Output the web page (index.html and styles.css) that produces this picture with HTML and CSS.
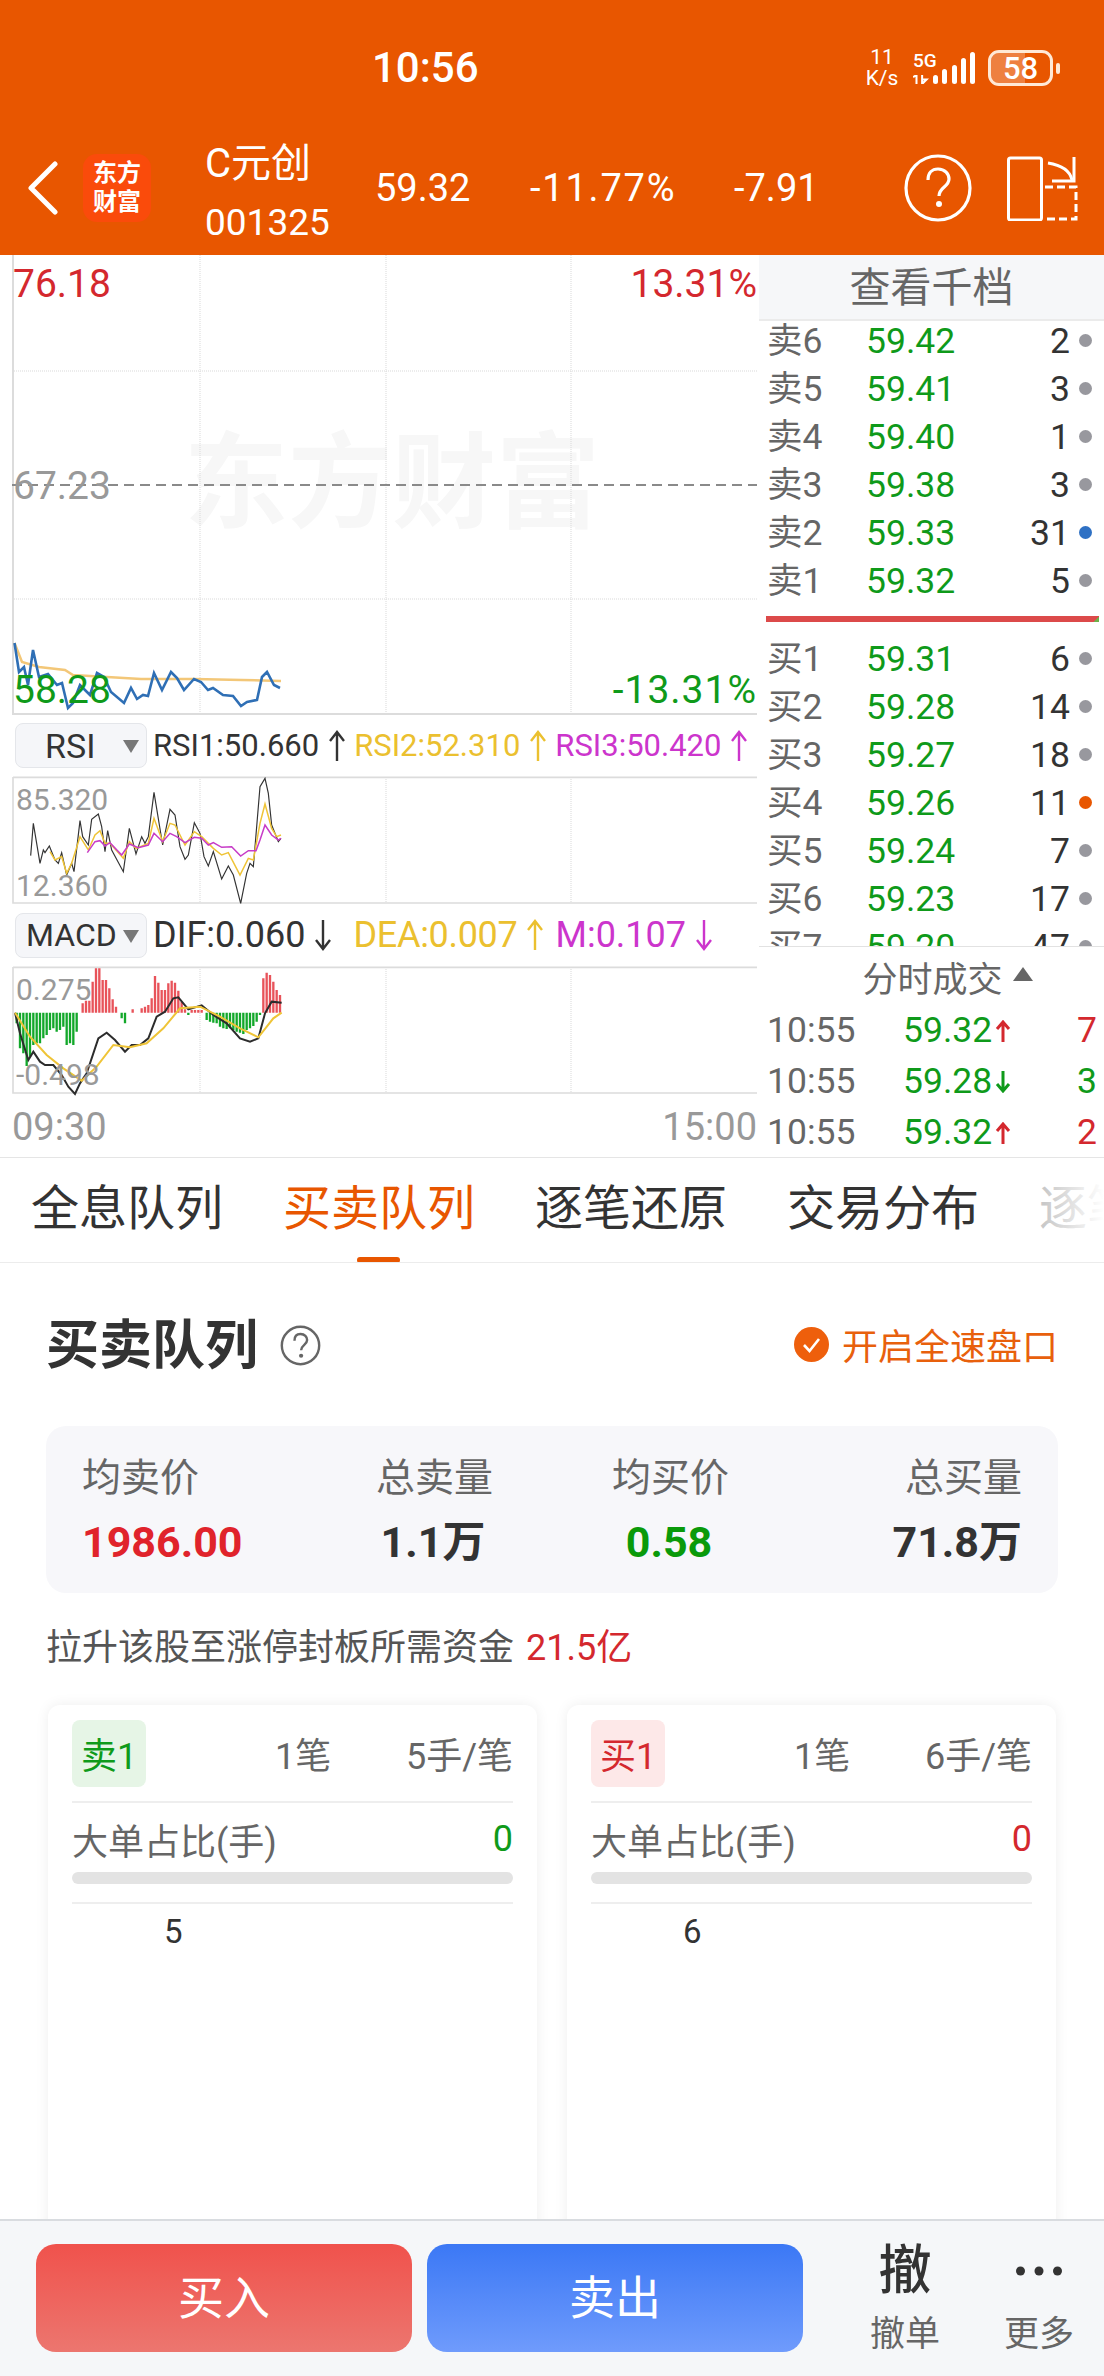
FILE: index.html
```html
<!DOCTYPE html>
<html lang="zh-CN">
<head>
<meta charset="utf-8">
<title>C元创 001325</title>
<link rel="stylesheet" href="styles.css">
</head>
<body>
<svg class="defs" width="0" height="0" aria-hidden="true">
  <symbol id="arrow-up" viewBox="0 0 18 32"><path d="M9 31V2M2 11L9 2L16 11" fill="none" stroke="currentColor" stroke-width="2.4"/></symbol>
  <symbol id="arrow-down" viewBox="0 0 18 32"><path d="M9 1V30M2 21L9 30L16 21" fill="none" stroke="currentColor" stroke-width="2.4"/></symbol>
  <symbol id="tick-up" viewBox="0 0 16 22"><path d="M8 22V3M2 9L8 2L14 9" fill="none" stroke="currentColor" stroke-width="3"/></symbol>
  <symbol id="tick-down" viewBox="0 0 16 22"><path d="M8 0V19M2 13L8 20L14 13" fill="none" stroke="currentColor" stroke-width="3"/></symbol>
</svg>
<div class="page">
  <header class="top">
    <div class="status">
      <span class="clock">10:56</span>
      <div class="status-icons">
        <div class="speed"><span>11</span><span>K/s</span></div>
        <div class="net">
          <span class="net-5g">5G</span>
          <svg class="net-arrows" width="16" height="9" viewBox="0 0 14 8"><path d="M3 0V8M0 2L3 0M8 0V8M8 8L12 4H8" fill="none" stroke="#fff" stroke-width="1.8"/></svg>
        </div>
        <svg class="bars" width="44" height="32" viewBox="0 0 44 32">
          <rect x="0" y="23" width="5" height="9" rx="2.5" fill="#fff"/>
          <rect x="9" y="17" width="5" height="15" rx="2.5" fill="#fff"/>
          <rect x="19" y="13" width="5" height="19" rx="2.5" fill="#fff"/>
          <rect x="28" y="6" width="5" height="26" rx="2.5" fill="#fff"/>
          <rect x="37" y="0" width="5" height="32" rx="2.5" fill="#fff"/>
        </svg>
        <div class="battery"><span class="battery-fill"></span><span class="battery-num">58</span></div>
      </div>
    </div>
    <nav class="nav">
      <svg class="back" width="31" height="54" viewBox="0 0 31 54"><path d="M28 3L4 27L28 51" fill="none" stroke="#fff" stroke-width="5" stroke-linecap="round" stroke-linejoin="round"/></svg>
      <div class="logo"><span>东方</span><span>财富</span></div>
      <div class="stock"><div class="stock-name">C元创</div><div class="stock-code">001325</div></div>
      <span class="quote q-price">59.32</span>
      <span class="quote q-pct">-11.77%</span>
      <span class="quote q-chg">-7.91</span>
      <svg class="help" width="68" height="68" viewBox="0 0 68 68">
        <circle cx="34" cy="34" r="32" fill="none" stroke="#fff" stroke-width="3.2"/>
        <path d="M24 26C24 19 28 15 34 15C41 15 45 20 45 25C45 33 35 33 35 42" fill="none" stroke="#fff" stroke-width="3.2"/>
        <circle cx="35" cy="50" r="3" fill="#fff"/>
      </svg>
      <svg class="rotate" width="71" height="66" viewBox="0 0 71 66">
        <rect x="1.5" y="3" width="33" height="62" rx="2" fill="none" stroke="#fff" stroke-width="3"/>
        <path d="M41 8C54 10 63 16 65 25" fill="none" stroke="#fff" stroke-width="3"/>
        <path d="M67 2V26H45" fill="none" stroke="#fff" stroke-width="3"/>
        <path d="M38 32H69V64H38" fill="none" stroke="#fff" stroke-width="3" stroke-dasharray="8 4"/>
      </svg>
    </nav>
  </header>

  <section class="market">
    <div class="charts">
      <div class="chart">
        <div class="watermark">东方财富</div>
        <svg class="chart-svg" width="745" height="459" viewBox="12 255 745 459">
          <g class="grid">
            <path d="M200 255V713M386 255V713M571 255V713M14 371H757M14 599H757"/>
          </g>
          <path class="frame" d="M13 255V714H757"/>
          <path d="M12 485H757" fill="none" stroke="#8a8a8a" stroke-width="2" stroke-dasharray="10 6"/>
          <polyline class="avg" points="14.5,643 22,662 39,667 65,670 73,675 107,677 141,679 194,679 242,680 281,681"/>
          <polyline class="price-line" points="14.5,643 19,672 24,667 28,685 33,650 39,677 48,674 57,685 62,683 68,708 73,703 80,685 90,695 97,673 104,677 111,692 124,703 131,688 137,699 143,695 148,696 154,673 162,690 171,672 177,678 184,690 194,679 201,682 208,690 213,688 223,695 233,696 241,706 247,702 257,700 262,677 267,672 274,685 280,688"/>
        </svg>
        <span class="lbl lbl-big red tl">76.18</span>
        <span class="lbl lbl-big red tr">13.31%</span>
        <span class="lbl lbl-big gray ml">67.23</span>
        <span class="lbl lbl-big green bl">58.28</span>
        <span class="lbl lbl-big green br">-13.31%</span>
      </div>

      <div class="ind-row">
        <div class="ind-select"><span class="rsi-name">RSI</span><i class="caret"></i></div>
        <div class="reads">
          <span class="read dark">RSI1:50.660<svg class="up"><use href="#arrow-up"/></svg></span>
          <span class="read yellow">RSI2:52.310<svg class="up"><use href="#arrow-up"/></svg></span>
          <span class="read magenta">RSI3:50.420<svg class="up"><use href="#arrow-up"/></svg></span>
        </div>
      </div>

      <div class="chart">
        <svg class="chart-svg" width="745" height="126" viewBox="36 231 2235 378">
          <path class="grid-z" d="M600 231V609M1158 231V609M1713 231V609"/>
          <path class="frame-z" d="M39 231V609H2271M39 232H2271"/>
          <polyline class="k" points="92,467 100,370 120,490 130,450 135,458 148,438 165,480 175,490 185,458 200,525 215,490 222,515 240,362 248,410 265,435 275,358 295,342 305,380 315,455 323,392 335,450 370,515 388,385 408,462 425,410 435,430 445,410 462,277 488,435 510,328 525,345 540,440 555,478 565,465 583,368 600,400 612,470 625,498 640,455 665,537 685,498 700,525 722,610 740,520 750,490 760,500 780,260 795,235 805,280 815,375 835,425 843,415"/>
          <polyline class="y" points="150,455 165,480 185,470 200,520 215,490 240,410 265,450 285,405 300,392 315,430 330,430 370,475 388,425 408,445 445,430 462,355 488,425 510,370 525,375 555,435 583,395 605,410 640,445 665,465 685,458 720,525 745,475 760,480 780,370 795,312 815,385 830,410 843,405"/>
          <polyline class="m" points="262,458 285,425 300,422 315,438 330,428 365,465 388,432 415,443 445,435 462,400 488,425 510,400 530,410 555,428 583,412 605,415 625,435 640,428 665,442 695,440 722,468 745,452 768,452 780,420 795,375 815,405 835,420 843,415"/>
        </svg>
        <span class="lbl lbl-small gray rsi-hi">85.320</span>
        <span class="lbl lbl-small gray rsi-lo">12.360</span>
      </div>

      <div class="ind-row">
        <div class="ind-select"><span class="macd-name">MACD</span><i class="caret"></i></div>
        <div class="reads reads-macd">
          <span class="read dark">DIF:0.060<svg class="up read-gap"><use href="#arrow-down"/></svg></span>
          <span class="read yellow dea">DEA:0.007<svg class="up"><use href="#arrow-up"/></svg></span>
          <span class="read magenta">M:0.107<svg class="up"><use href="#arrow-down"/></svg></span>
        </div>
      </div>

      <div class="chart">
        <svg class="chart-svg" width="745" height="127" viewBox="36 21 2235 381">
          <path class="grid-z" d="M600 21V399M1158 21V399M1713 21V399"/>
          <path class="frame-z" d="M39 21V399H2271M39 22H2271"/>
          <path class="bar-g" d="M50 158V190M60 158V265M70 158V280M80 158V318M90 158V290M100 158V255M110 158V250M120 158V250M130 158V235M140 158V225M150 158V210M160 158V205M170 158V215M180 158V210M190 158V200M200 158V255M210 158V250M220 158V255M230 158V215M365 158V175M375 158V190M565 158V165M620 158V180M630 158V185M640 158V188M650 158V190M660 158V200M670 158V205M680 158V207M690 158V205M700 158V210M710 158V215M720 158V218M730 158V222M740 158V210M750 158V205M760 158V198M770 158V185M780 158V165"/>
          <path class="bar-r" d="M248 158V130M258 158V122M268 158V122M278 158V65M288 158V25M298 158V25M308 158V60M318 158V60M328 158V85M338 158V118M348 158V140M398 158V148M425 158V145M435 158V140M445 158V135M455 158V115M465 158V48M475 158V68M485 158V90M495 158V90M505 158V70M515 158V62M525 158V68M535 158V92M545 158V125M555 158V148M575 158V150M585 158V150M595 158V150M605 158V150M790 158V55M800 158V38M810 158V45M820 158V65M830 158V90M840 158V105"/>
          <polyline class="k2" points="45,158 60,220 85,300 100,275 120,305 135,315 160,315 185,345 205,380 225,402 240,370 260,340 295,235 320,218 345,240 375,275 395,255 420,255 445,235 470,170 495,155 520,115 535,112 550,130 565,148 605,136 640,165 680,190 720,235 750,245 775,235 795,160 815,125 845,128"/>
          <polyline class="y2" points="45,158 90,230 140,285 190,325 245,362 290,320 340,255 390,262 440,250 490,205 540,145 600,140 660,170 720,205 775,232 820,175 845,158"/>
        </svg>
        <span class="lbl lbl-small gray macd-hi">0.275</span>
        <span class="lbl lbl-small gray macd-lo">-0.498</span>
      </div>

      <div class="axis"><span>09:30</span><span>15:00</span></div>
    </div>

    <aside class="side">
      <div class="side-head">查看千档</div>
      <div class="book">
        <div class="book-rows">
          <div class="row"><span class="r-lab">卖6</span><span class="r-price">59.42</span><span class="r-qty">2</span><i class="dot"></i></div>
          <div class="row"><span class="r-lab">卖5</span><span class="r-price">59.41</span><span class="r-qty">3</span><i class="dot"></i></div>
          <div class="row"><span class="r-lab">卖4</span><span class="r-price">59.40</span><span class="r-qty">1</span><i class="dot"></i></div>
          <div class="row"><span class="r-lab">卖3</span><span class="r-price">59.38</span><span class="r-qty">3</span><i class="dot"></i></div>
          <div class="row"><span class="r-lab">卖2</span><span class="r-price">59.33</span><span class="r-qty">31</span><i class="dot dot-blue"></i></div>
          <div class="row"><span class="r-lab">卖1</span><span class="r-price">59.32</span><span class="r-qty">5</span><i class="dot"></i></div>
        </div>
        <div class="ratio"></div>
        <div class="row"><span class="r-lab">买1</span><span class="r-price">59.31</span><span class="r-qty">6</span><i class="dot"></i></div>
        <div class="row"><span class="r-lab">买2</span><span class="r-price">59.28</span><span class="r-qty">14</span><i class="dot"></i></div>
        <div class="row"><span class="r-lab">买3</span><span class="r-price">59.27</span><span class="r-qty">18</span><i class="dot"></i></div>
        <div class="row"><span class="r-lab">买4</span><span class="r-price">59.26</span><span class="r-qty">11</span><i class="dot dot-orange"></i></div>
        <div class="row"><span class="r-lab">买5</span><span class="r-price">59.24</span><span class="r-qty">7</span><i class="dot"></i></div>
        <div class="row"><span class="r-lab">买6</span><span class="r-price">59.23</span><span class="r-qty">17</span><i class="dot"></i></div>
        <div class="row"><span class="r-lab">买7</span><span class="r-price">59.20</span><span class="r-qty">47</span><i class="dot"></i></div>
      </div>
      <div class="ticks-head">分时成交<i class="caret-up"></i></div>
      <div class="tick"><span class="t-time">10:55</span><span class="t-price">59.32</span><svg class="t-arrow red"><use href="#tick-up"/></svg><span class="t-qty red">7</span></div>
      <div class="tick"><span class="t-time">10:55</span><span class="t-price">59.28</span><svg class="t-arrow green"><use href="#tick-down"/></svg><span class="t-qty green">3</span></div>
      <div class="tick"><span class="t-time">10:55</span><span class="t-price">59.32</span><svg class="t-arrow red"><use href="#tick-up"/></svg><span class="t-qty red">2</span></div>
    </aside>
  </section>

  <div class="tabs">
    <span class="tab">全息队列</span>
    <span class="tab active">买卖队列</span>
    <span class="tab">逐笔还原</span>
    <span class="tab">交易分布</span>
    <span class="tab faded">逐笔还原</span>
  </div>

  <main class="content">
    <div class="title-row">
      <h1 class="title">买卖队列</h1>
      <svg class="title-help" width="41" height="41" viewBox="0 0 68 68">
        <circle cx="34" cy="34" r="31" fill="none" stroke="#666" stroke-width="4"/>
        <path d="M24 26C24 19 28 15 34 15C41 15 45 20 45 25C45 33 35 33 35 42" fill="none" stroke="#666" stroke-width="4"/>
        <circle cx="35" cy="51" r="3.5" fill="#666"/>
      </svg>
      <div class="fast">
        <svg width="35" height="35" viewBox="0 0 35 35"><circle cx="17.5" cy="17.5" r="17.5" fill="#ee5f0c"/><path d="M10 18L15.5 24L25 12" fill="none" stroke="#fff" stroke-width="2.6"/></svg>
        <span>开启全速盘口</span>
      </div>
    </div>

    <div class="stats">
      <div class="stat"><div class="stat-lab">均卖价</div><div class="stat-val red-b">1986.00</div></div>
      <div class="stat stat-c"><div class="stat-lab">总卖量</div><div class="stat-val">1.1万</div></div>
      <div class="stat stat-c"><div class="stat-lab">均买价</div><div class="stat-val green-b">0.58</div></div>
      <div class="stat stat-r"><div class="stat-lab">总买量</div><div class="stat-val">71.8万</div></div>
    </div>

    <p class="note">拉升该股至涨停封板所需资金<span class="note-val">21.5亿</span></p>

    <div class="cards">
      <div class="card">
        <div class="card-head"><span class="badge badge-g">卖1</span><span class="c-count">1笔</span><span class="c-avg">5手/笔</span></div>
        <div class="big-row"><span>大单占比(手)</span><span class="green">0</span></div>
        <div class="track"></div>
        <div class="card-list"><span>5</span></div>
      </div>
      <div class="card">
        <div class="card-head"><span class="badge badge-r">买1</span><span class="c-count">1笔</span><span class="c-avg">6手/笔</span></div>
        <div class="big-row"><span>大单占比(手)</span><span class="red">0</span></div>
        <div class="track"></div>
        <div class="card-list"><span>6</span></div>
      </div>
    </div>
  </main>

  <footer class="bottom">
    <button class="btn btn-buy">买入</button>
    <button class="btn btn-sell">卖出</button>
    <div class="action action-first"><span class="act-big">撤</span><span class="act-lab">撤单</span></div>
    <div class="action">
      <span class="act-big"><svg width="46" height="10" viewBox="0 0 46 10"><circle cx="4.5" cy="5" r="4.5" fill="#333"/><circle cx="23" cy="5" r="4.5" fill="#333"/><circle cx="41.5" cy="5" r="4.5" fill="#333"/></svg></span>
      <span class="act-lab">更多</span>
    </div>
  </footer>
</div>
</body>
</html>
```

FILE: styles.css
```css
* { box-sizing: border-box; }
html, body { margin: 0; padding: 0; background: #fff; }
body { font-family: Roboto, "Noto Sans CJK SC", sans-serif; color: #333; }
.defs { position: absolute; }
.page { width: 1104px; height: 2376px; overflow: hidden; display: flex; flex-direction: column; }

/* header */
.top { background: #e85600; color: #fff; height: 255px; flex: none; }
.status { height: 128px; padding: 8px 51px 0 372px; display: flex; align-items: center; }
.clock { font-size: 42px; font-weight: 500; line-height: 1; }
.status-icons { margin-left: auto; display: flex; align-items: center; }
.speed { width: 34px; display: flex; flex-direction: column; align-items: center; font-size: 21px; line-height: 21px; }
.net { width: 20px; margin-left: 14px; display: flex; flex-direction: column; height: 32px; }
.net-5g { font-size: 19px; font-weight: 500; line-height: 18px; }
.net-arrows { margin-top: 5px; display: block; flex: none; }
.bars { display: block; margin-right: 11px; }
.battery { position: relative; width: 65px; height: 36px; border: 3px solid #ffe9d6; border-radius: 11px; display: flex; align-items: center; justify-content: center; }
.battery::after { content: ""; position: absolute; left: 65px; top: 10px; width: 4px; height: 11px; border-radius: 2px; background: #ffe9d6; }
.battery-fill { position: absolute; left: 0; top: 0; bottom: 0; width: 58%; background: rgba(255,255,255,.25); border-radius: 8px 0 0 8px; }
.battery-num { position: relative; font-size: 31px; font-weight: 500; line-height: 1; }
.nav { height: 127px; padding: 0 26px 8px 27px; display: flex; align-items: center; }
.back { flex: none; display: block; }
.logo { width: 68px; height: 68px; margin-left: 25px; background: #fa4b0b; border-radius: 14px; flex: none; display: flex; flex-direction: column; align-items: center; justify-content: center; font-size: 24px; line-height: 29px; font-weight: 700; }
.stock { width: 170px; margin-left: 54px; align-self: flex-start; margin-top: 11px; flex: none; }
.stock-name { font-size: 40px; line-height: 50px; }
.stock-code { font-size: 37px; line-height: 40px; margin-top: 14px; }
.quote { font-size: 38px; line-height: 1; flex: none; }
.q-price { width: 155px; }
.q-pct { width: 204px; letter-spacing: 1.8px; }
.help { margin-left: auto; display: block; }
.rotate { margin-left: 35px; display: block; }

/* market */
.market { flex: none; height: 903px; display: grid; grid-template-columns: 759px 345px; border-bottom: 1px solid #e5e5e5; }
.charts { min-width: 0; }
.chart { position: relative; margin-left: 12px; width: 745px; }
.chart-svg { display: block; overflow: visible; position: relative; }
.watermark { position: absolute; left: 172px; top: 170px; font-size: 104px; line-height: 120px; font-weight: 700; color: #f7f7f7; white-space: nowrap; }
.grid path, .grid-z { fill: none; stroke: #d9d9d9; }
.grid path { stroke-width: 1; stroke-dasharray: 1 1; }
.grid-z { stroke-width: 3; stroke-dasharray: 3 3; }
.frame { fill: none; stroke: #dcdcdc; stroke-width: 2; }
.frame-z { fill: none; stroke: #dcdcdc; stroke-width: 5; }
.avg { fill: none; stroke: #f3c778; stroke-width: 2.5; }
.price-line { fill: none; stroke: #2f6fb5; stroke-width: 2.6; }
.k { fill: none; stroke: #333; stroke-width: 3.5; }
.y { fill: none; stroke: #efc437; stroke-width: 4.5; }
.m { fill: none; stroke: #c73cc7; stroke-width: 4.5; }
.k2 { fill: none; stroke: #2c2c2c; stroke-width: 6; }
.y2 { fill: none; stroke: #efc437; stroke-width: 6; }
.bar-g { fill: none; stroke: #12a82a; stroke-width: 7; }
.bar-r { fill: none; stroke: #e8535a; stroke-width: 7; }
.lbl { position: absolute; line-height: 44px; white-space: nowrap; }
.lbl-big { font-size: 39px; }
.lbl-small { font-size: 30px; }
.red { color: #d4282e; }
.green { color: #0f9a1a; }
.gray { color: #999; }
.tl { left: 1px; top: 7px; }
.tr { right: 0; top: 7px; }
.ml { left: 1px; top: 209px; }
.bl { left: 1px; top: 413px; }
.br { right: 0; top: 413px; letter-spacing: 1px; }
.rsi-hi { left: 4px; top: 1px; }
.rsi-lo { left: 4px; top: 87px; }
.macd-hi { left: 4px; top: 1px; }
.macd-lo { left: 4px; top: 86px; }
.ind-row { height: 63px; padding-left: 15px; display: flex; align-items: center; }
.ind-row:nth-of-type(4) { height: 64px; }
.ind-select { position: relative; width: 132px; height: 45px; flex: none; background: #f5f6f9; border: 1px solid #e4e6ea; border-radius: 8px; display: flex; align-items: center; font-size: 34px; line-height: 1; color: #333; }
.rsi-name { margin-left: 29px; }
.macd-name { margin-left: 10px; font-size: 32px; }
.caret { position: absolute; left: 107px; top: 16px; width: 0; height: 0; border-left: 8px solid transparent; border-right: 8px solid transparent; border-top: 13px solid #777; }
.reads { margin-left: 6px; display: flex; gap: 8px; font-size: 31px; line-height: 1; white-space: nowrap; }
.reads-macd { font-size: 36px; }
.read { display: flex; align-items: center; gap: 9px; }
.read .up { width: 18px; height: 32px; }
.read .read-gap { margin-right: 13px; }
.dea { margin-right: 3px; letter-spacing: -.3px; }
.dark { color: #333; }
.yellow { color: #ebc02f; }
.magenta { color: #cc35cc; }
.axis { height: 63px; padding: 2px 2px 0 12px; display: flex; justify-content: space-between; align-items: center; font-size: 38px; color: #999; }

/* side panel */
.side { display: flex; flex-direction: column; min-width: 0; }
.side-head { height: 66px; flex: none; background: #f6f7f9; border-bottom: 2px solid #ebebeb; text-align: center; font-size: 41px; line-height: 67px; color: #666; }
.book { height: 625px; flex: none; overflow: hidden; }
.book-rows { margin-top: -3px; }
.row { height: 48px; padding: 0 12px 0 8px; display: flex; align-items: center; font-size: 35.5px; line-height: 1; }
.r-lab { width: 99px; color: #666; flex: none; }
.r-price { color: #0f9a1a; flex: none; }
.r-qty { margin-left: auto; color: #333; }
.dot { width: 13px; height: 13px; border-radius: 50%; background: #98989e; margin: 0 0 4px 9px; flex: none; }
.dot-blue { background: #2f71c4; }
.dot-orange { background: #e85600; }
.ratio { height: 6px; margin: 10px 5px 14px 7px; background: linear-gradient(135deg, #dc4a4a 0 calc(100% - 4px), #6fb04a calc(100% - 4px)); }
.ticks-head { height: 59px; flex: none; border-top: 1px solid #e2e2e2; display: flex; align-items: center; justify-content: center; gap: 10px; padding-left: 32px; font-size: 35px; color: #666; }
.caret-up { width: 0; height: 0; border-left: 10px solid transparent; border-right: 10px solid transparent; border-bottom: 14px solid #666; margin-bottom: 4px; }
.tick { height: 51px; padding: 0 7px 0 8px; display: flex; align-items: center; font-size: 35.5px; line-height: 1; }
.t-time { width: 136px; color: #666; flex: none; }
.t-price { color: #0f9a1a; flex: none; }
.t-arrow { width: 16px; height: 22px; margin-left: 3px; }
.t-qty { margin-left: auto; }

/* tabs */
.tabs { flex: none; height: 105px; padding-left: 31px; display: flex; gap: 60px; align-items: center; border-bottom: 1px solid #ececec; font-size: 48px; line-height: 1; white-space: nowrap; overflow: hidden; position: relative; color: #333; }
.tabs::after { content: ""; position: absolute; right: 0; top: 0; bottom: 0; width: 60px; background: linear-gradient(90deg, rgba(255,255,255,0), #fff); }
.tab { flex: none; position: relative; padding-bottom: 2px; }
.active { color: #e85600; }
.active::after { content: ""; position: absolute; left: 74px; bottom: -28px; width: 43px; height: 6px; border-radius: 3px; background: #e85600; }
.faded { color: #c9c9c9; }

/* content */
.content { flex: 1; min-height: 0; overflow: hidden; padding: 53px 46px 0; }
.title-row { height: 60px; display: flex; align-items: center; }
.title { margin: 0; font-size: 53px; line-height: 60px; font-weight: 700; color: #333; }
.title-help { margin-left: 22px; margin-bottom: 2px; display: block; }
.fast { margin-left: auto; margin-right: 0; padding-bottom: 4px; display: flex; align-items: center; gap: 13px; font-size: 36px; color: #e8600c; }
.fast svg { display: block; }
.stats { margin-top: 50px; height: 167px; background: #f7f7fa; border-radius: 20px; padding: 30px 36px 0; display: grid; grid-template-columns: 294px 236px 114px 1fr; }
.stat-lab { font-size: 39px; line-height: 44px; color: #666; white-space: nowrap; }
.stat-val { margin-top: 20px; font-size: 43px; line-height: 44px; font-weight: 700; color: #333; white-space: nowrap; }
.stat-c { width: 114px; text-align: center; }
.stat-r { text-align: right; }
.red-b { color: #e0232b; }
.green-b { color: #0a9a0a; }
.note { margin: 30px 0 0; font-size: 36px; line-height: 50px; color: #555; white-space: nowrap; }
.note-val { margin-left: 12px; color: #d4282e; }
.cards { margin-top: 32px; padding: 0 2px; display: grid; grid-template-columns: 489px 489px; gap: 30px; }
.card { height: 560px; padding: 15px 24px 0; background: #fff; border-radius: 12px; box-shadow: 0 0 14px rgba(0,0,0,.07); }
.card-head { height: 83px; padding-bottom: 15px; border-bottom: 2px solid #eee; display: flex; align-items: center; font-size: 36px; color: #666; }
.badge { width: 74px; height: 67px; border-radius: 8px; display: flex; align-items: center; justify-content: center; flex: none; }
.badge-g { background: #e6f5e6; color: #0f9a1a; }
.badge-r { background: #fde8e8; color: #d4282e; }
.c-count { margin-left: 129px; }
.c-avg { margin-left: auto; }
.big-row { margin-top: 11px; height: 50px; display: flex; justify-content: space-between; align-items: center; font-size: 36px; color: #666; }
.track { margin-top: 8px; height: 12px; border-radius: 6px; background: #e3e3e3; }
.card-list { margin-top: 18px; border-top: 2px solid #eee; padding: 6px 0 0 92px; font-size: 33px; line-height: 44px; color: #333; }

/* bottom */
.bottom { flex: none; height: 157px; background: #f5f7f9; border-top: 2px solid #d9dce0; padding: 23px 0 0 36px; display: flex; align-items: flex-start; }
.btn { width: 376px; height: 108px; border: 0; border-radius: 20px; color: #fff; font-family: inherit; font-size: 46px; line-height: 1; padding: 0; }
.btn-buy { background: linear-gradient(180deg, #f0524c, #ec766f); }
.btn-sell { margin-left: 15px; background: linear-gradient(180deg, #3b78f5, #6f9bfc); }
.action { width: 70px; margin-left: 64px; display: flex; flex-direction: column; align-items: center; }
.action-first { margin-left: 67px; }
.act-big { height: 54px; font-size: 53px; line-height: 54px; font-weight: 500; color: #333; display: flex; align-items: center; }
.act-lab { margin-top: 19px; font-size: 35px; line-height: 36px; color: #666; white-space: nowrap; }
```
